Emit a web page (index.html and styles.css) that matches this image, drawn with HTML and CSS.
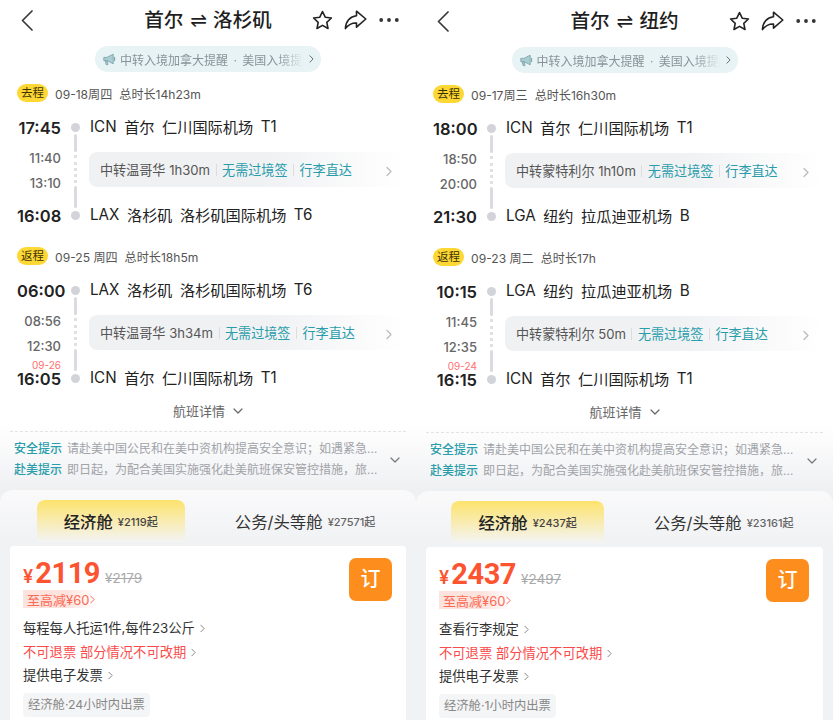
FILE: index.html
```html
<!DOCTYPE html>
<html lang="zh-CN">
<head>
  <meta charset="UTF-8" />
  <meta name="viewport" content="width=device-width, initial-scale=1.0"/>
  <title>航班详情</title>
  <link rel="stylesheet" href="styles.css">
</head>
<body>
  <svg class="sprite" aria-hidden="true">
    <symbol id="i-back" viewBox="0 0 12 21"><path d="M11 1 1.5 10.5 11 20" fill="none" stroke="currentColor" stroke-width="1.7" stroke-linecap="round" stroke-linejoin="round"/></symbol>
    <symbol id="i-star" viewBox="0 0 21 20"><path d="M10.5 1.5 13.2 7.2 19.4 8 14.8 12.3 16 18.5 10.5 15.4 5 18.5 6.2 12.3 1.6 8 7.8 7.2Z" fill="none" stroke="currentColor" stroke-width="1.6" stroke-linejoin="round"/></symbol>
    <symbol id="i-share" viewBox="0 0 23 20"><path d="M12.5 1.2 21.8 9 12.5 17.2V13C8 12.8 4.5 14.6 1.4 18.6 1.6 11.5 6 6.4 12.5 5.8Z" fill="none" stroke="currentColor" stroke-width="1.6" stroke-linejoin="round"/></symbol>
    <symbol id="i-more" viewBox="0 0 20 4"><circle cx="2.2" cy="2" r="1.9" fill="currentColor"/><circle cx="10" cy="2" r="1.9" fill="currentColor"/><circle cx="17.8" cy="2" r="1.9" fill="currentColor"/></symbol>
    <symbol id="i-horn" viewBox="0 0 13 13"><path d="M.8 4.4H4L10.2 1.2V10.8L4 7.6H.8Z M2.2 7.8H4.2L5 11.6H3.2Z" fill="#a9cdd3" stroke="#7ea6ae" stroke-width=".9" stroke-linejoin="round"/><path d="M11.6 4.4V7.6" stroke="#7ea6ae" stroke-width="1.1" stroke-linecap="round"/></symbol>
    <symbol id="i-right" viewBox="0 0 6 10"><path d="M1 1 5 5 1 9" fill="none" stroke="currentColor" stroke-width="1.2" stroke-linecap="round" stroke-linejoin="round"/></symbol>
    <symbol id="i-down" viewBox="0 0 10 6"><path d="M1 1 5 5 9 1" fill="none" stroke="currentColor" stroke-width="1.2" stroke-linecap="round" stroke-linejoin="round"/></symbol>
  </svg>

  <div class="screens">

    <section class="panel">
      <header class="top-bar">
        <svg class="back-icon"><use href="#i-back"/></svg>
        <h1 class="route">首尔<span class="route-arrow">⇌</span>洛杉矶</h1>
        <div class="top-actions">
          <svg class="star-icon"><use href="#i-star"/></svg>
          <svg class="share-icon"><use href="#i-share"/></svg>
          <svg class="more-icon"><use href="#i-more"/></svg>
        </div>
      </header>

      <div class="notice">
        <svg class="horn-icon"><use href="#i-horn"/></svg>
        <span class="notice-text">中转入境加拿大提醒 · 美国入境提醒</span>
        <svg class="notice-chev"><use href="#i-right"/></svg>
      </div>

      <div class="leg">
        <div class="leg-head">
          <span class="leg-tag">去程</span>
          <span>09-18周四</span>
          <span>总时长14h23m</span>
        </div>
        <div class="leg-grid">
          <div class="time">17:45</div>
          <div class="rail">
            <i class="rail-dot"></i><i class="rail-bar"></i><i class="rail-dots"></i><i class="rail-bar rail-bar-low"></i><i class="rail-dot"></i>
          </div>
          <div class="place"><span>ICN</span><span>首尔</span><span>仁川国际机场</span><span>T1</span></div>
          <div class="stop-times"><span>11:40</span><span>13:10</span></div>
          <div class="transfer">
            <span>中转温哥华 1h30m</span><i class="sep"></i><span class="teal">无需过境签</span><i class="sep"></i><span class="teal">行李直达</span>
            <svg class="transfer-chev"><use href="#i-right"/></svg>
          </div>
          <div class="time">16:08</div>
          <div class="place"><span>LAX</span><span>洛杉矶</span><span>洛杉矶国际机场</span><span>T6</span></div>
        </div>
      </div>

      <div class="leg">
        <div class="leg-head">
          <span class="leg-tag">返程</span>
          <span>09-25 周四</span>
          <span>总时长18h5m</span>
        </div>
        <div class="leg-grid">
          <div class="time">06:00</div>
          <div class="rail">
            <i class="rail-dot"></i><i class="rail-bar"></i><i class="rail-dots"></i><i class="rail-bar rail-bar-low"></i><i class="rail-dot"></i>
          </div>
          <div class="place"><span>LAX</span><span>洛杉矶</span><span>洛杉矶国际机场</span><span>T6</span></div>
          <div class="stop-times"><span>08:56</span><span>12:30</span></div>
          <div class="transfer">
            <span>中转温哥华 3h34m</span><i class="sep"></i><span class="teal">无需过境签</span><i class="sep"></i><span class="teal">行李直达</span>
            <svg class="transfer-chev"><use href="#i-right"/></svg>
          </div>
          <div class="time"><span class="next-day">09-26</span>16:05</div>
          <div class="place"><span>ICN</span><span>首尔</span><span>仁川国际机场</span><span>T1</span></div>
        </div>
      </div>

      <div class="details-link">航班详情<svg class="details-chev"><use href="#i-down"/></svg></div>

      <div class="tips">
        <div class="tips-lines">
          <p class="tip"><b>安全提示</b>请赴美中国公民和在美中资机构提高安全意识；如遇紧急情况请及时联系使馆</p>
          <p class="tip"><b>赴美提示</b>即日起，为配合美国实施强化赴美航班保安管控措施，旅客请提前到达机场办理</p>
        </div>
        <svg class="tips-chev"><use href="#i-down"/></svg>
      </div>

      <div class="sheet">
        <div class="cabin-tabs">
          <div class="cabin-tab cabin-tab-on">经济舱<small>¥2119起</small></div>
          <div class="cabin-tab">公务/头等舱<small>¥27571起</small></div>
        </div>
        <div class="fare">
          <div class="fare-top">
            <div>
              <div class="price"><span class="price-sign">¥</span><span class="price-num">2119</span><s class="price-old">¥2179</s></div>
              <div class="promo">至高减¥60<svg class="promo-chev"><use href="#i-right"/></svg></div>
            </div>
            <div class="book-btn">订</div>
          </div>
          <ul class="rules">
            <li>每程每人托运1件,每件23公斤<svg class="rule-chev"><use href="#i-right"/></svg></li>
            <li class="rule-red">不可退票 部分情况不可改期<svg class="rule-chev"><use href="#i-right"/></svg></li>
            <li>提供电子发票<svg class="rule-chev"><use href="#i-right"/></svg></li>
          </ul>
          <span class="ticket-tag">经济舱·24小时内出票</span>
        </div>
      </div>
    </section>

    <section class="panel panel-low">
      <header class="top-bar">
        <svg class="back-icon"><use href="#i-back"/></svg>
        <h1 class="route">首尔<span class="route-arrow">⇌</span>纽约</h1>
        <div class="top-actions">
          <svg class="star-icon"><use href="#i-star"/></svg>
          <svg class="share-icon"><use href="#i-share"/></svg>
          <svg class="more-icon"><use href="#i-more"/></svg>
        </div>
      </header>

      <div class="notice">
        <svg class="horn-icon"><use href="#i-horn"/></svg>
        <span class="notice-text">中转入境加拿大提醒 · 美国入境提醒</span>
        <svg class="notice-chev"><use href="#i-right"/></svg>
      </div>

      <div class="leg">
        <div class="leg-head">
          <span class="leg-tag">去程</span>
          <span>09-17周三</span>
          <span>总时长16h30m</span>
        </div>
        <div class="leg-grid">
          <div class="time">18:00</div>
          <div class="rail">
            <i class="rail-dot"></i><i class="rail-bar"></i><i class="rail-dots"></i><i class="rail-bar rail-bar-low"></i><i class="rail-dot"></i>
          </div>
          <div class="place"><span>ICN</span><span>首尔</span><span>仁川国际机场</span><span>T1</span></div>
          <div class="stop-times"><span>18:50</span><span>20:00</span></div>
          <div class="transfer">
            <span>中转蒙特利尔 1h10m</span><i class="sep"></i><span class="teal">无需过境签</span><i class="sep"></i><span class="teal">行李直达</span>
            <svg class="transfer-chev"><use href="#i-right"/></svg>
          </div>
          <div class="time">21:30</div>
          <div class="place"><span>LGA</span><span>纽约</span><span>拉瓜迪亚机场</span><span>B</span></div>
        </div>
      </div>

      <div class="leg">
        <div class="leg-head">
          <span class="leg-tag">返程</span>
          <span>09-23 周二</span>
          <span>总时长17h</span>
        </div>
        <div class="leg-grid">
          <div class="time">10:15</div>
          <div class="rail">
            <i class="rail-dot"></i><i class="rail-bar"></i><i class="rail-dots"></i><i class="rail-bar rail-bar-low"></i><i class="rail-dot"></i>
          </div>
          <div class="place"><span>LGA</span><span>纽约</span><span>拉瓜迪亚机场</span><span>B</span></div>
          <div class="stop-times"><span>11:45</span><span>12:35</span></div>
          <div class="transfer">
            <span>中转蒙特利尔 50m</span><i class="sep"></i><span class="teal">无需过境签</span><i class="sep"></i><span class="teal">行李直达</span>
            <svg class="transfer-chev"><use href="#i-right"/></svg>
          </div>
          <div class="time"><span class="next-day">09-24</span>16:15</div>
          <div class="place"><span>ICN</span><span>首尔</span><span>仁川国际机场</span><span>T1</span></div>
        </div>
      </div>

      <div class="details-link">航班详情<svg class="details-chev"><use href="#i-down"/></svg></div>

      <div class="tips">
        <div class="tips-lines">
          <p class="tip"><b>安全提示</b>请赴美中国公民和在美中资机构提高安全意识；如遇紧急情况请及时联系使馆</p>
          <p class="tip"><b>赴美提示</b>即日起，为配合美国实施强化赴美航班保安管控措施，旅客请提前到达机场办理</p>
        </div>
        <svg class="tips-chev"><use href="#i-down"/></svg>
      </div>

      <div class="sheet">
        <div class="cabin-tabs">
          <div class="cabin-tab cabin-tab-on">经济舱<small>¥2437起</small></div>
          <div class="cabin-tab">公务/头等舱<small>¥23161起</small></div>
        </div>
        <div class="fare">
          <div class="fare-top">
            <div>
              <div class="price"><span class="price-sign">¥</span><span class="price-num">2437</span><s class="price-old">¥2497</s></div>
              <div class="promo">至高减¥60<svg class="promo-chev"><use href="#i-right"/></svg></div>
            </div>
            <div class="book-btn">订</div>
          </div>
          <ul class="rules">
            <li>查看行李规定<svg class="rule-chev"><use href="#i-right"/></svg></li>
            <li class="rule-red">不可退票 部分情况不可改期<svg class="rule-chev"><use href="#i-right"/></svg></li>
            <li>提供电子发票<svg class="rule-chev"><use href="#i-right"/></svg></li>
          </ul>
          <span class="ticket-tag">经济舱·1小时内出票</span>
        </div>
      </div>
    </section>

  </div>
</body>
</html>
```

FILE: styles.css
```css
html, body {
  margin: 0;
  padding: 0;
  height: 100%;
  font-family: Inter, "Noto Sans CJK SC", sans-serif;
  color: #222;
  background: #fff;
  overflow: hidden;
}

.sprite {
  display: none;
}

.screens {
  display: grid;
  grid-template-columns: 416px 417px;
  height: 720px;
}

.panel {
  height: 720px;
  overflow: hidden;
  background: linear-gradient(#fff 425px, #eff0f2 490px);
}

.panel-low {
  padding-top: 1px;
  box-sizing: border-box;
  height: 720px;
}

/* top bar */
.top-bar {
  display: grid;
  grid-template-columns: 1fr auto 1fr;
  align-items: center;
  height: 40px;
  padding: 0 17px;
}

.back-icon {
  width: 12px;
  height: 21px;
  margin-left: 4px;
  color: #3a3a3a;
}

.route {
  display: flex;
  align-items: center;
  margin: 0;
  font-size: 19.6px;
  font-weight: 500;
  line-height: 28px;
  color: #1f1f1f;
}

.route-arrow {
  margin: 0 6px 0 7px;
  font-family: "DejaVu Sans", sans-serif;
  font-size: 20px;
  font-weight: 400;
}

.top-actions {
  display: flex;
  align-items: center;
  justify-content: flex-end;
  gap: 11px;
  color: #222;
}

.star-icon {
  width: 21px;
  height: 20px;
}

.share-icon {
  width: 23px;
  height: 20px;
}

.more-icon {
  width: 20px;
  height: 4px;
  margin-left: 1px;
  color: #333;
}

/* notice pill */
.notice {
  display: flex;
  align-items: center;
  box-sizing: border-box;
  width: 226px;
  height: 26px;
  margin: 6px auto 0;
  padding: 0 7px 0 8px;
  border-radius: 13px;
  background: #e7f3f4;
}

.horn-icon {
  flex: none;
  width: 13px;
  height: 13px;
  margin-right: 4px;
}

.notice-text {
  flex: none;
  width: 184px;
  overflow: hidden;
  white-space: nowrap;
  font-size: 12px;
  word-spacing: 2px;
  color: #87939a;
  -webkit-mask-image: linear-gradient(to right, #000 85%, transparent);
  mask-image: linear-gradient(to right, #000 85%, transparent);
}

.notice-chev {
  flex: none;
  width: 5px;
  height: 8px;
  margin-left: 5px;
  color: #666;
}

/* flight legs */
.leg {
  padding: 12px 10px 0 17px;
}

.leg + .leg {
  padding-top: 20px;
}

.leg-head {
  display: flex;
  align-items: center;
  gap: 7px;
  height: 18px;
  font-size: 12.1px;
  color: #555;
}

.leg-head .leg-tag {
  width: 31px;
  height: 18px;
  border-radius: 9px;
  background: #fdd835;
  color: #3d3104;
  font-size: 11.5px;
  line-height: 18px;
  text-align: center;
}

.leg-grid {
  display: grid;
  grid-template-columns: 44px 29px 1fr;
  grid-template-rows: 24px 64px 24px;
  margin-top: 13px;
}

.time {
  position: relative;
  font-size: 16.5px;
  font-weight: 600;
  line-height: 26px;
  text-align: right;
  white-space: nowrap;
  color: #222;
}

.next-day {
  position: absolute;
  right: 0;
  top: -7px;
  font-size: 10px;
  font-weight: 400;
  line-height: 12px;
  color: #ff6f6f;
}

.rail {
  grid-column: 2;
  grid-row: 1 / 4;
  display: flex;
  flex-direction: column;
  align-items: center;
  padding-top: 7.5px;
}

.rail-dot {
  width: 9px;
  height: 9px;
  border-radius: 50%;
  background: #d3d4da;
}

.rail-bar {
  width: 3px;
  height: 18px;
  margin-top: 2px;
  border-radius: 2px;
  background: #dadbe0;
}

.rail-bar-low {
  height: 22px;
  margin: 3px 0;
}

.rail-dots {
  height: 28px;
  margin-top: 3px;
  border-left: 3px dotted #dfe0e4;
}

.place {
  display: flex;
  align-items: center;
  gap: 7.5px;
  padding-bottom: 2px;
  font-size: 15.2px;
  color: #222;
  white-space: nowrap;
}

.stop-times {
  display: flex;
  flex-direction: column;
  align-items: flex-end;
  padding-top: 6.5px;
  font-size: 13px;
  font-weight: 500;
  line-height: 25px;
  color: #666;
}

.transfer {
  display: flex;
  align-items: center;
  height: 35px;
  margin: 13px 0 0 -1px;
  padding: 0 5px 0 11px;
  border-radius: 8px;
  background: linear-gradient(to right, #f0f1f3 55%, #fff);
  font-size: 13.1px;
  color: #555;
  white-space: nowrap;
}

.sep {
  width: 1px;
  height: 12px;
  margin: 0 5.5px;
  background: #dcdde0;
}

.teal {
  color: #2a9dab;
}

.transfer-chev {
  width: 6px;
  height: 11px;
  margin-left: auto;
  margin-right: 9px;
  margin-top: 3px;
  color: #b9babd;
}

.details-link {
  display: flex;
  align-items: center;
  justify-content: center;
  gap: 8px;
  height: 20px;
  margin-top: 10px;
  font-size: 13px;
  color: #666;
}

.details-chev {
  width: 10px;
  height: 6px;
  margin-top: 1px;
  color: #666;
}

/* tips */
.tips {
  display: flex;
  align-items: center;
  margin: 11px 10px 0;
  padding: 7px 6px 10px 3px;
  border-top: 1px dashed #e2e3e6;
}

.tips-lines {
  flex: 1;
  min-width: 0;
  padding-right: 5px;
  padding-left: 1px;
}

.tip {
  margin: 0;
  overflow: hidden;
  white-space: nowrap;
  text-overflow: ellipsis;
  font-size: 12px;
  line-height: 20.5px;
  color: #a0a3a8;
}

.tip b {
  margin-right: 5px;
  font-weight: 500;
  color: #2a9dab;
}

.tips-chev {
  flex: none;
  width: 10px;
  height: 6px;
  color: #777;
}

/* cabin sheet */
.sheet {
  height: 231px;
  border-radius: 13px 13px 0 0;
  background: linear-gradient(#fafafb, #f1f2f4 50px);
}

.cabin-tabs {
  display: flex;
  justify-content: center;
  align-items: center;
  height: 42px;
  padding: 10px 4px 0 0;
}

.cabin-tab {
  display: flex;
  align-items: center;
  height: 42px;
  margin-left: 50px;
  font-size: 16.4px;
  color: #333;
  white-space: nowrap;
}

.cabin-tab small {
  margin-left: 5px;
  font-size: 11px;
  font-weight: 500;
  color: #666;
}

.cabin-tab-on {
  margin-left: 0;
  padding: 0 27px;
  border-radius: 8px 8px 0 0;
  background: linear-gradient(#fde36c, #f3f4f5);
  font-weight: 500;
  color: #222;
}

.cabin-tab-on small {
  color: #444;
}

.fare {
  margin: 4px 10px 0;
  padding: 10px 14px 0 13px;
  height: 180px;
  border-radius: 4px;
  background: #fff;
}

.fare-top {
  display: flex;
  justify-content: space-between;
  align-items: flex-start;
}

.price {
  display: flex;
  align-items: baseline;
  height: 34px;
  line-height: 34px;
  color: #fc5431;
}

.price-sign {
  margin-right: 2px;
  font-size: 18px;
  font-weight: 600;
}

.price-num {
  font-family: Roboto, sans-serif;
  font-size: 29px;
  font-weight: 700;
  letter-spacing: -.4px;
}

.price-old {
  margin-left: 5px;
  font-size: 13.5px;
  color: #a8a9ab;
}

.promo {
  display: flex;
  align-items: center;
  width: fit-content;
  height: 18px;
  padding: 0 1px 0 4px;
  background: linear-gradient(to right, #fde3dd 60%, #fff);
  font-size: 13px;
  color: #fb6a55;
}

.promo-chev {
  width: 5px;
  height: 9px;
  margin-left: 1px;
}

.book-btn {
  width: 43px;
  height: 43px;
  margin-top: 2px;
  border-radius: 7px;
  background: #fd8d1c;
  color: #fff;
  font-size: 20px;
  font-weight: 500;
  line-height: 43px;
  text-align: center;
}

.rules {
  margin: 9px 0 0;
  padding: 0;
  list-style: none;
  font-size: 13.3px;
  line-height: 23.5px;
  color: #333;
}

.rules li {
  display: flex;
  align-items: center;
}

.rule-red {
  color: #fb4a4a;
}

.rule-chev {
  width: 5px;
  height: 9px;
  margin-left: 5px;
  color: #888;
}

.ticket-tag {
  display: block;
  width: fit-content;
  height: 24px;
  margin-top: 5px;
  padding: 0 5px;
  border-radius: 4px;
  background: #f4f5f6;
  font-size: 12.3px;
  line-height: 24px;
  color: #888;
}
```
